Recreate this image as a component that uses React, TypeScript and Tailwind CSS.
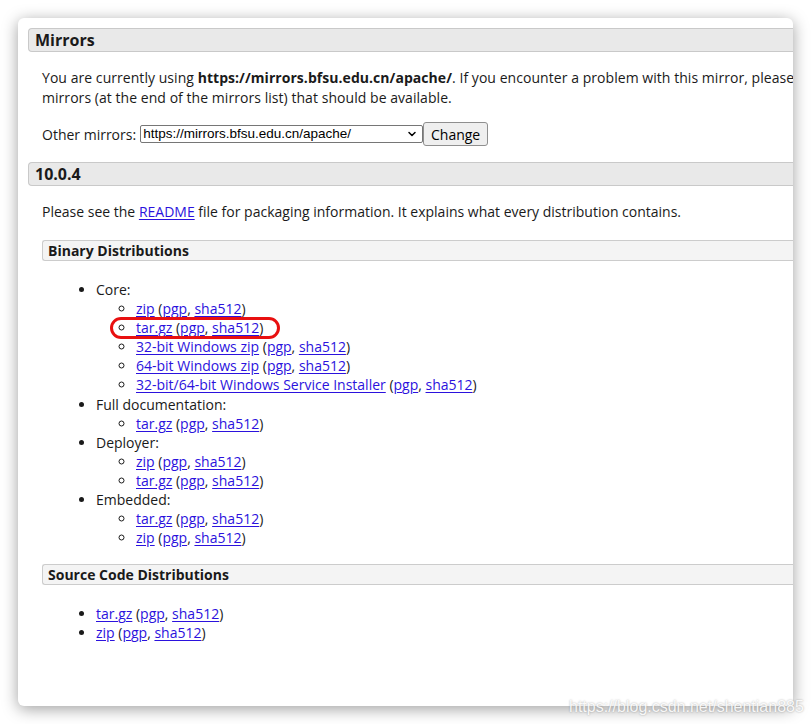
import { ChevronDown } from 'lucide-react'

const linkCls = 'text-[#2b12dd] underline underline-offset-[2px]'

function Sums({ name }: { name: string }) {
  return (
    <>
      <a className={linkCls}>{name}</a> (<a className={linkCls}>pgp</a>, <a className={linkCls}>sha512</a>)
    </>
  )
}

const groups = [
  { label: 'Core:', items: ['zip', 'tar.gz', '32-bit Windows zip', '64-bit Windows zip', '32-bit/64-bit Windows Service Installer'] },
  { label: 'Full documentation:', items: ['tar.gz'] },
  { label: 'Deployer:', items: ['zip', 'tar.gz'] },
  { label: 'Embedded:', items: ['tar.gz', 'zip'] },
]

export default function App() {
  return (
    <div className="w-[811px] h-[724px] bg-white p-[18px] relative overflow-hidden font-['Open_Sans',sans-serif] text-[14px] text-[#1a1a1a]">
      {/* Browser window */}
      <div className="w-[775px] h-[688px] bg-white rounded-[6px] overflow-hidden shadow-[0_3px_16px_rgba(0,0,0,0.38)]">
        <div className="w-[1100px] pt-[10px] pl-[10px]">
          {/* Mirrors */}
          <div className="h-[24px] flex items-center pl-[6px] bg-[#e9e9e9] border border-r-0 border-[#c9c9c9] rounded-l-[4px] text-[16px] font-bold">
            Mirrors
          </div>
          <div className="pl-[14px]">
            <p className="mt-[16px] leading-[20px] whitespace-nowrap tracking-[0.05px]">
              You are currently using <b>https://mirrors.bfsu.edu.cn/apache/</b>. If you encounter a problem with this mirror, please select another mirror. If all mirrors are failing, there are backup
              <br />
              mirrors (at the end of the mirrors list) that should be available.
            </p>
            <div className="mt-[14px] h-[24px] flex items-center">
              <span className="mr-[4px]">Other mirrors:</span>
              <div className="w-[283px] h-[18px] border border-[#767676] rounded-[2px] flex items-center justify-between pl-[2px] pr-[4px] font-['Liberation_Sans',Arial,sans-serif] text-[13.5px] text-black">
                <span>https://mirrors.bfsu.edu.cn/apache/</span>
                <ChevronDown className="w-[12px] h-[12px]" strokeWidth={3} />
              </div>
              <button className="w-[65px] h-[24px] bg-[#efefef] border border-[#8f8f8f] rounded-[3px] text-[14px] text-black">
                Change
              </button>
            </div>
          </div>

          {/* 10.0.4 */}
          <div className="mt-[16px] h-[24px] flex items-center pl-[6px] bg-[#e9e9e9] border border-r-0 border-[#c9c9c9] rounded-l-[4px] text-[16px] font-bold">
            10.0.4
          </div>
          <div className="pl-[14px]">
            <p className="mt-[16px] leading-[20px]">
              Please see the <a className={linkCls}>README</a> file for packaging information. It explains what every distribution contains.
            </p>

            <div className="mt-[18px] h-[21px] flex items-center pl-[5px] bg-[#f4f4f4] border border-r-0 border-[#cccccc] rounded-l-[3px] font-bold">
              Binary Distributions
            </div>
            <ul className="mt-[19px] pl-[54px] list-disc leading-[19.1px]">
              {groups.map((g, gi) => (
                <li key={g.label}>
                  {g.label}
                  <ul className="pl-[40px] list-[circle]">
                    {g.items.map((it, ii) => (
                      <li key={it + ii} className="relative">
                        <Sums name={it} />
                        {gi === 0 && ii === 1 && (
                          <span className="absolute left-[-26px] top-[-1px] w-[170px] h-[22px] border-[3px] border-[#e81010] rounded-full pointer-events-none" />
                        )}
                      </li>
                    ))}
                  </ul>
                </li>
              ))}
            </ul>

            <div className="mt-[17px] h-[21px] flex items-center pl-[5px] bg-[#f4f4f4] border border-r-0 border-[#cccccc] rounded-l-[3px] font-bold">
              Source Code Distributions
            </div>
            <ul className="mt-[19px] pl-[54px] list-disc leading-[19.1px]">
              <li><Sums name="tar.gz" /></li>
              <li><Sums name="zip" /></li>
            </ul>
          </div>
        </div>
      </div>

      {/* watermark */}
      <span className="absolute left-[569px] top-[695px] font-['Liberation_Sans',Arial,sans-serif] text-[16px] text-white/90 [text-shadow:0_0_2px_rgba(0,0,0,0.35)]">
        https://blog.csdn.net/shentian885
      </span>
    </div>
  )
}
